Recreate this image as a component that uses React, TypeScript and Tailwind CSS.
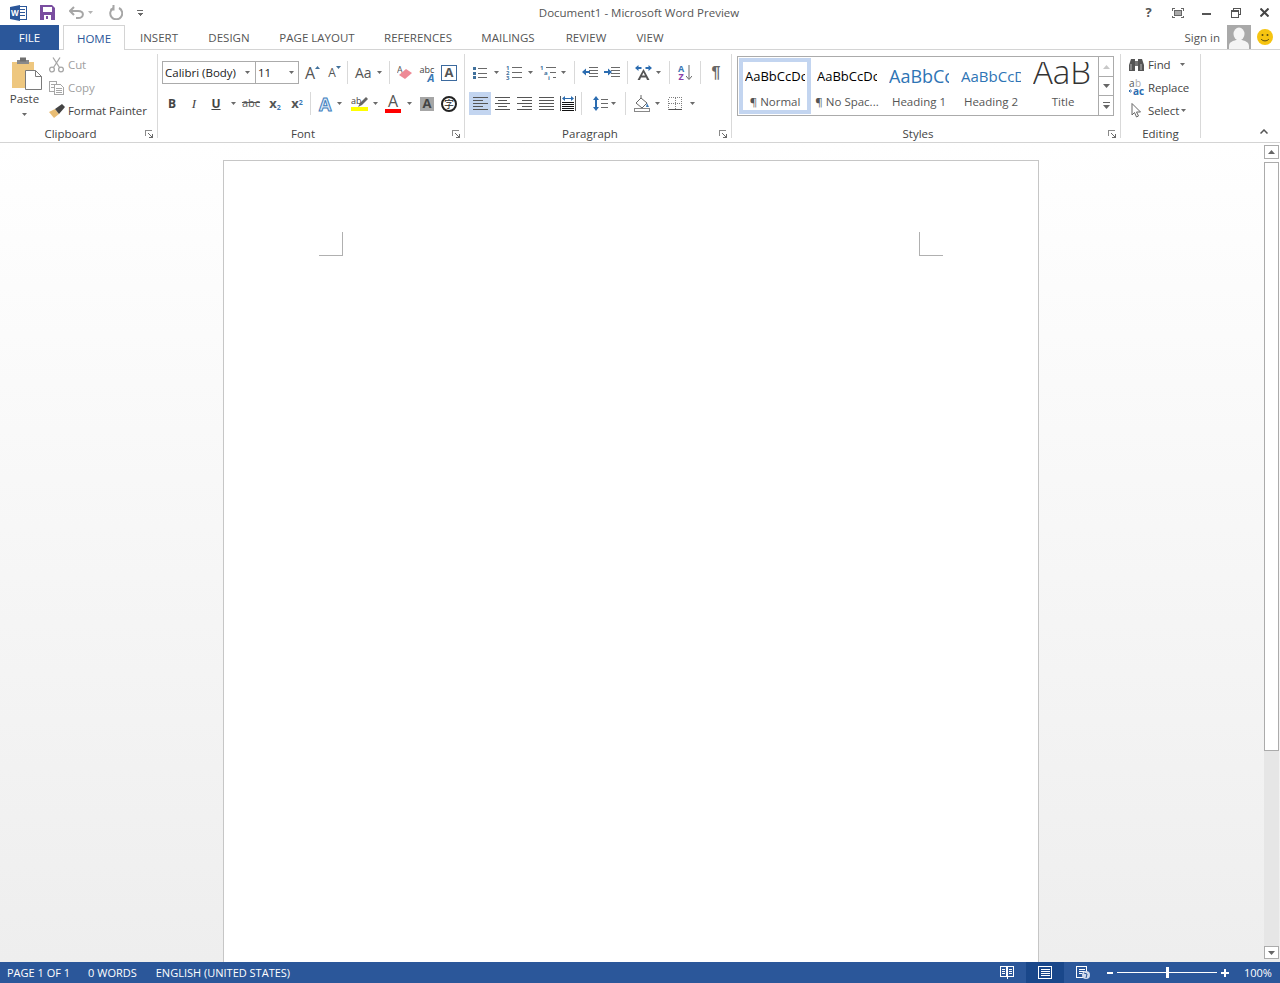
import type { ReactNode } from 'react';

const GRAY = '#6a6a6a';
const BLUE = '#41719c';

function Caret({ className = '' }: { className?: string }) {
  return (
    <svg width="5" height="3" viewBox="0 0 5 3" className={className}>
      <path d="M0 0h5L2.5 3z" fill="#6a6a6a" />
    </svg>
  );
}

function Launcher() {
  return (
    <svg width="8" height="8" viewBox="0 0 8 8" shapeRendering="crispEdges">
      <path d="M0.5 6V0.5H6.5" fill="none" stroke="#8a8a8a" />
      <path d="M3 3l4 4M7 4v3H4" fill="none" stroke="#6a6a6a" />
    </svg>
  );
}

function Sep({ className = '' }: { className?: string }) {
  return <div className={`w-px h-[23px] shrink-0 bg-[#d9d9d9] ${className}`} />;
}

function Btn({ className = 'w-[22px]', children }: { className?: string; children: ReactNode }) {
  return <div className={`h-[23px] flex items-center justify-center shrink-0 ${className}`}>{children}</div>;
}

function Group({ className, label, launcher = true, children }: { className: string; label: string; launcher?: boolean; children: ReactNode }) {
  return (
    <div className={`h-[84px] flex flex-col shrink-0 border-r border-[#d9d9d9] ${className}`}>
      <div className="flex-1 min-h-0">{children}</div>
      <div className="h-[14px] -mb-[3px] flex items-center">
        <div className="flex-1 text-center text-[11.5px] leading-[14px] text-[#444]">{label}</div>
        {launcher && <div className="w-[16px] flex justify-center"><Launcher /></div>}
      </div>
    </div>
  );
}

function AlignIcon({ kind }: { kind: 'left' | 'center' | 'right' | 'justify' }) {
  const spans: Record<string, [number, number][]> = {
    left: [[0, 15], [0, 10], [0, 15], [0, 10], [0, 15]],
    center: [[0, 15], [3, 12], [0, 15], [3, 12], [0, 15]],
    right: [[0, 15], [5, 15], [0, 15], [5, 15], [0, 15]],
    justify: [[0, 15], [0, 15], [0, 15], [0, 15], [0, 15]],
  };
  return (
    <svg width="15" height="13" viewBox="0 0 15 13" shapeRendering="crispEdges">
      {spans[kind].map(([a, b], i) => (
        <path key={i} d={`M${a} ${i * 3 + 0.5}H${b}`} stroke="#555" />
      ))}
    </svg>
  );
}

function IndentIcon({ flip }: { flip?: boolean }) {
  return (
    <svg width="16" height="13" viewBox="0 0 16 13" shapeRendering="crispEdges">
      <path d="M7 1.5h9M7 4.5h9M7 7.5h9M7 10.5h9" stroke={GRAY} />
      {flip ? (
        <path d="M0 5h4V2.5L8 6 4 9.5V7H0z" fill="#2b6cb0" shapeRendering="auto" />
      ) : (
        <path d="M8 5H4V2.5L0 6l4 3.5V7h4z" fill="#2b6cb0" shapeRendering="auto" />
      )}
    </svg>
  );
}

function Person() {
  return (
    <svg width="24" height="24" viewBox="0 0 24 24">
      <rect width="24" height="24" fill="#a9a9a9" />
      <ellipse cx="12" cy="9" rx="5.5" ry="6.5" fill="#f4f4f4" />
      <path d="M2 24v-3c0-4 4-5 7-6h6c3 1 7 2 7 6v3z" fill="#f4f4f4" />
    </svg>
  );
}

function SmallAction({ icon, label, muted, children }: { icon: ReactNode; label: string; muted?: boolean; children?: ReactNode }) {
  return (
    <div className="h-[23px] flex items-center">
      <div className="w-[19px] flex justify-center shrink-0">{icon}</div>
      <span className={`text-[11.5px] ml-[2px] tracking-[-0.1px] whitespace-nowrap ${muted ? 'text-[#a0a0a0]' : 'text-[#444]'}`}>{label}</span>
      {children}
    </div>
  );
}

function StylePreview({ label, className, selected, text = 'AaBbCcDc' }: { label: string; className: string; selected?: boolean; text?: string }) {
  return (
    <div className={`w-[72px] shrink-0 h-full flex flex-col items-center box-border border-[4px] ${selected ? 'border-[#c3d5f0]' : 'border-transparent'}`}>
      <div className="h-[33px] w-[60px] flex items-end overflow-hidden">
        <span className={`whitespace-nowrap ${className}`}>{text}</span>
      </div>
      <div className="text-[11.5px] text-[#555] mt-[8px] leading-[16px] whitespace-nowrap">{label}</div>
    </div>
  );
}

function ClipboardGroup() {
  return (
    <Group className="w-[158px]" label="Clipboard">
      <div className="flex">
        <div className="w-[47px] flex flex-col items-center pt-[3px] pl-[2px]">
          <svg width="32" height="33" viewBox="0 0 32 33" className="ml-[4px]">
            <rect x="1" y="5" width="22" height="26" fill="#eec77f" />
            <rect x="6" y="3" width="12" height="4" fill="#8a8a8a" />
            <rect x="9" y="0.5" width="6" height="4" fill="#6f6f6f" />
            <path d="M14.5 13.5h10l6 6v13h-16z" fill="#fff" stroke="#7a7a7a" />
            <path d="M24.5 13.5v6h6" fill="none" stroke="#7a7a7a" />
          </svg>
          <div className="text-[11.5px] text-[#444] leading-[16px] mt-[1px]">Paste</div>
          <Caret className="mt-[6px]" />
        </div>
        <div className="-mt-[1px]">
          <SmallAction muted label="Cut" icon={
            <svg width="15" height="16" viewBox="0 0 15 16" fill="none" stroke="#a6a6a6" strokeWidth="1.3">
              <circle cx="3" cy="12.5" r="2.4" /><circle cx="12" cy="12.5" r="2.4" />
              <path d="M4.5 10.5L11 0.5M10.5 10.5L4 0.5" />
            </svg>
          } />
          <SmallAction muted label="Copy" icon={
            <svg width="15" height="14" viewBox="0 0 15 14" fill="#fff" stroke="#a6a6a6" shapeRendering="crispEdges">
              <path d="M0.5 0.5h7v10h-7z" /><path d="M2 3.5h4M2 6.5h4" />
              <path d="M5.5 3.5h6l3 3v7h-9z" /><path d="M7 7.5h6M7 9.5h6M7 11.5h6" />
            </svg>
          } />
          <SmallAction label="Format Painter" icon={
            <svg width="16" height="14" viewBox="0 0 16 14">
              <path d="M0 8l6-3 4 5-5 4z" fill="#e9bd74" />
              <path d="M6 5l7-5 3 3-6 7z" fill="#444" />
            </svg>
          } />
        </div>
      </div>
    </Group>
  );
}

function FontGroup() {
  return (
    <Group className="w-[307px]" label="Font">
      <div className="flex flex-col pl-[4px] pt-[7px]">
        <div className="flex items-center h-[23px]">
          <div className="h-[23px] w-[94px] border border-[#ababab] flex items-center pl-[2px] pr-[5px] justify-between text-[11.5px] text-[#222]">
            <span>Calibri (Body)</span><Caret />
          </div>
          <div className="h-[23px] w-[44px] -ml-px border border-[#ababab] flex items-center pl-[2px] pr-[4px] justify-between text-[11.5px] text-[#222]">
            <span>11</span><Caret />
          </div>
          <Btn className="w-[22px]">
            <span className="relative text-[16px] leading-none text-[#555]">A<svg width="5" height="3" viewBox="0 0 5 3" className="absolute -right-[5px] top-[1px]"><path d="M0 3h5L2.5 0z" fill={BLUE} /></svg></span>
          </Btn>
          <Btn className="w-[22px]">
            <span className="relative text-[12px] leading-none text-[#555]">A<svg width="5" height="3" viewBox="0 0 5 3" className="absolute -right-[5px] -top-[1px]"><path d="M0 0h5L2.5 3z" fill={BLUE} /></svg></span>
          </Btn>
          <Sep className="ml-[4px]" />
          <Btn className="w-[35px] justify-start pl-[7px]">
            <span className="text-[14px] text-[#555]">Aa</span><Caret className="ml-[5px]" />
          </Btn>
          <Sep className="ml-[6px]" />
          <Btn className="w-[22px] ml-[4px]">
            <svg width="16" height="15" viewBox="0 0 16 15">
              <text x="0" y="8" fontSize="9" fill="#555" fontFamily="Open Sans">A</text>
              <path d="M2 10l7-6 6 4-7 6z" fill="#ee8a96" />
            </svg>
          </Btn>
          <Btn className="w-[22px]">
            <div className="relative w-[15px] h-[16px] leading-none">
              <span className="block text-[9px] text-[#444] leading-[9px]">abc</span>
              <span className="block text-[11px] font-bold italic text-[#3a78b5] leading-[8px] text-right">A</span>
            </div>
          </Btn>
          <Btn className="w-[22px]">
            <div className="w-[16px] h-[16px] border border-[#3c6a9e] flex items-center justify-center text-[13px] leading-none font-bold text-[#555]">A</div>
          </Btn>
        </div>
        <div className="flex items-center h-[23px] mt-[8px] -ml-[1px]">
          <Btn><span className="text-[12px] font-bold text-[#444]">B</span></Btn>
          <Btn><span className="text-[13px] italic text-[#444] font-['Liberation_Serif',serif]">I</span></Btn>
          <Btn><span className="text-[12px] font-bold underline text-[#444]">U</span></Btn>
          <Btn className="w-[13px]"><Caret /></Btn>
          <Btn><span className="text-[11px] line-through text-[#555]">abc</span></Btn>
          <Btn className="w-[22px] ml-[2px]"><span className="text-[13px] leading-none font-bold text-[#555]">x<sub className="text-[7px] text-[#3a78b5]">2</sub></span></Btn>
          <Btn><span className="text-[13px] leading-none font-bold text-[#555]">x<sup className="text-[7px] text-[#3a78b5]">2</sup></span></Btn>
          <Sep className="ml-[2px]" />
          <Btn className="w-[35px] justify-start pl-[8px]">
            <span className="text-[18px] leading-none font-bold text-[#dbe8f6] [-webkit-text-stroke:1px_#3f7fc0]">A</span>
            <Caret className="ml-[6px]" />
          </Btn>
          <Btn className="w-[34px] justify-start pl-[5px]">
            <svg width="17" height="15" viewBox="0 0 17 15">
              <text x="0" y="8" fontSize="9" fill="#444" fontFamily="Open Sans">ab</text>
              <path d="M7 11l2-4 6-6 2 2-6 6z" fill="#666" />
              <rect y="11" width="17" height="4" fill="#ffff00" />
            </svg>
            <Caret className="ml-[5px]" />
          </Btn>
          <Btn className="w-[36px] justify-start pl-[5px]">
            <div className="flex flex-col items-center">
              <span className="text-[16px] leading-[12px] text-[#555]">A</span>
              <div className="w-[16px] h-[4px] mt-[2px] bg-[#ff0000]" />
            </div>
            <Caret className="ml-[6px]" />
          </Btn>
          <Btn>
            <div className="w-[14px] h-[14px] bg-[#a6a6a6] flex items-center justify-center text-[13px] font-bold leading-none text-[#444]">A</div>
          </Btn>
          <Btn>
            <div className="w-[16px] h-[16px] rounded-full border-2 border-[#222] flex items-center justify-center text-[10px] leading-none text-[#222] font-['Noto_Sans_CJK_SC',sans-serif]">字</div>
          </Btn>
        </div>
      </div>
    </Group>
  );
}

function ParagraphGroup() {
  return (
    <Group className="w-[267px]" label="Paragraph">
      <div className="flex flex-col pt-[7px]">
        <div className="flex items-center h-[23px] pl-[4px]">
          <Btn>
            <svg width="14" height="13" viewBox="0 0 14 13" shapeRendering="crispEdges">
              <rect x="0" y="1" width="3" height="3" fill={BLUE} /><rect x="0" y="6" width="3" height="3" fill={BLUE} /><rect x="0" y="10" width="3" height="3" fill={BLUE} />
              <path d="M5 2.5h9M5 7.5h9M5 11.5h9" stroke={GRAY} />
            </svg>
          </Btn>
          <Btn className="w-[10px]"><Caret /></Btn>
          <Btn className="w-[22px] ml-[2px]">
            <svg width="16" height="15" viewBox="0 0 16 15">
              <text x="0" y="5" fontSize="6" fill={BLUE} fontFamily="Open Sans" fontWeight="700">1</text>
              <text x="0" y="10" fontSize="6" fill={BLUE} fontFamily="Open Sans" fontWeight="700">2</text>
              <text x="0" y="15" fontSize="6" fill={BLUE} fontFamily="Open Sans" fontWeight="700">3</text>
              <path d="M6 2.5h10M6 7.5h10M6 12.5h10" stroke={GRAY} />
            </svg>
          </Btn>
          <Btn className="w-[10px]"><Caret /></Btn>
          <Btn className="w-[22px] ml-[3px]">
            <svg width="18" height="15" viewBox="0 0 18 15">
              <text x="0" y="5" fontSize="6" fill={BLUE} fontFamily="Open Sans" fontWeight="700">1</text>
              <text x="4" y="10" fontSize="6" fill={BLUE} fontFamily="Open Sans" fontWeight="700">a</text>
              <text x="8" y="15" fontSize="6" fill={BLUE} fontFamily="Open Sans" fontWeight="700">i</text>
              <path d="M6 2.5h10M10 7.5h6M13 12.5h3" stroke={GRAY} />
            </svg>
          </Btn>
          <Btn className="w-[6px]"><Caret /></Btn>
          <Sep className="ml-[8px]" />
          <Btn className="w-[22px] ml-[4px]"><IndentIcon /></Btn>
          <Btn><IndentIcon flip /></Btn>
          <Sep className="ml-[4px]" />
          <Btn className="w-[24px] ml-[3px]">
            <svg width="17" height="15" viewBox="0 0 17 15">
              <path d="M0 3L3.500 0v2h3v2h-3v2zM17 3L13.500 0v2h-3v2h3v2z" fill="#2b6cb0" />
              <path d="M2.500 15L8.500 4l6 11h-2.500l-1-2.500H6l-1 2.500zM7 10.500h3L8.500 7.500z" fill="#555" />
            </svg>
          </Btn>
          <Btn className="w-[6px]"><Caret /></Btn>
          <Sep className="ml-[8px]" />
          <Btn className="w-[30px]">
            <div className="flex flex-col items-center text-[9px] leading-[8px] font-bold mr-[2px]">
              <span className="text-[#3a78b5]">A</span>
              <span className="text-[#8a3fa8]">Z</span>
            </div>
            <svg width="6" height="15" viewBox="0 0 6 15"><path d="M3 0v14M0 11l3 3.500L6 11" fill="none" stroke={GRAY} /></svg>
          </Btn>
          <Sep />
          <Btn className="w-[30px]"><span className="text-[16px] font-bold text-[#666] font-['Liberation_Sans',sans-serif]">¶</span></Btn>
        </div>
        <div className="flex items-center h-[23px] mt-[8px] pl-[4px]">
          <Btn className="w-[22px] bg-[#c3d5f0]"><AlignIcon kind="left" /></Btn>
          <Btn><AlignIcon kind="center" /></Btn>
          <Btn><AlignIcon kind="right" /></Btn>
          <Btn><AlignIcon kind="justify" /></Btn>
          <Btn>
            <svg width="16" height="15" viewBox="0 0 16 15" shapeRendering="crispEdges">
              <path d="M.5 0v15M15.500 0v15" stroke="#555" />
              <path d="M2 6.500h12M2 8.500h12M2 10.500h12M2 12.500h12M2 14.500h12" stroke="#111" />
              <path d="M4 2h8v1H4z" fill="#2b6cb0" />
              <path d="M2 2.500L5 0v5zM14 2.500L11 0v5z" fill="#2b6cb0" shapeRendering="auto" />
            </svg>
          </Btn>
          <Sep className="ml-[2px]" />
          <Btn className="w-[26px] justify-end">
            <svg width="15" height="15" viewBox="0 0 15 15">
              <path d="M3 0L0 4h2v7H0l3 4 3-4H4V4h2z" fill="#2b6cb0" />
              <path d="M8 3.500h7M8 7.500h7M8 11.500h7" stroke={GRAY} />
            </svg>
          </Btn>
          <Btn className="w-[10px]"><Caret /></Btn>
          <Sep className="ml-[7px]" />
          <Btn className="w-[24px] justify-end">
            <svg width="16" height="17" viewBox="0 0 16 17">
              <path d="M2 8l5-5 6 5-5 5z" fill="#fff" stroke="#666" />
              <path d="M7 3V0" stroke="#666" />
              <path d="M13 8l2 4h-3z" fill="#3a78b5" />
              <rect x="0.5" y="13.500" width="15" height="3" fill="#fff" stroke="#888" />
            </svg>
          </Btn>
          <Btn className="w-[14px]"><Caret /></Btn>
          <Btn className="w-[18px] justify-end">
            <svg width="14" height="13" viewBox="0 0 14 13" shapeRendering="crispEdges">
              <path d="M.5 .5h13v12H.5zM7 .5v12M.5 6.500h13" fill="none" stroke="#808080" strokeDasharray="1 1" />
              <path d="M.5 12.500h13" stroke="#555" />
            </svg>
          </Btn>
          <Btn className="w-[14px] ml-[3px]"><Caret /></Btn>
        </div>
      </div>
    </Group>
  );
}

function StylesGroup() {
  return (
    <Group className="w-[389px]" label="Styles">
      <div className="pl-[5px] pt-[2px]">
        <div className="w-[377px] h-[60px] border border-[#ababab] flex">
          <div className="flex-1 flex p-px min-w-0 overflow-hidden">
            <StylePreview selected label="¶ Normal" className="text-[13px] leading-[20px] text-black" />
            <StylePreview label="¶ No Spac..." className="text-[13px] leading-[20px] text-black" />
            <StylePreview label="Heading 1" text="AaBbCc" className="text-[18px] leading-[20px] text-[#2e74b5]" />
            <StylePreview label="Heading 2" className="text-[15px] leading-[20px] text-[#2e74b5]" />
            <StylePreview label="Title" text="AaBl" className="text-[33px] leading-[28px] font-light text-[#333]" />
          </div>
          <div className="w-[15px] flex flex-col border-l border-[#ababab] shrink-0">
            <div className="h-[20px] flex items-center justify-center border-b border-[#ababab]">
              <svg width="7" height="4" viewBox="0 0 7 4"><path d="M0 4h7L3.500 0z" fill="#c8c8c8" /></svg>
            </div>
            <div className="h-[19px] flex items-center justify-center border-b border-[#ababab]">
              <svg width="7" height="4" viewBox="0 0 7 4"><path d="M0 0h7L3.500 4z" fill="#666" /></svg>
            </div>
            <div className="flex-1 flex flex-col items-center justify-center gap-[2px]">
              <div className="w-[7px] h-px bg-[#666]" />
              <svg width="7" height="4" viewBox="0 0 7 4"><path d="M0 0h7L3.500 4z" fill="#666" /></svg>
            </div>
          </div>
        </div>
      </div>
    </Group>
  );
}

function EditingGroup() {
  return (
    <Group className="w-[80px]" launcher={false} label="Editing">
      <div className="-mt-[1px] pl-[6px]">
        <SmallAction label="Find" icon={
          <svg width="15" height="14" viewBox="0 0 15 14">
            <path d="M0 13V7l2-6h4v12zM9 13V1h4l2 6v6z" fill="#555" />
            <rect x="6" y="3" width="3" height="5" fill="#777" />
            <path d="M2 6v6M12 6v6" stroke="#bbb" />
          </svg>
        }>
          <Caret className="ml-[9px]" />
        </SmallAction>
        <SmallAction label="Replace" icon={
          <svg width="16" height="17" viewBox="0 0 16 17">
            <text x="0" y="8" fontSize="10" fill="#555" fontFamily="Open Sans">a</text>
            <text x="6" y="8" fontSize="10" fill="#aaa" fontFamily="Open Sans">b</text>
            <text x="4" y="16" fontSize="10" fill="#2b6cb0" fontFamily="Open Sans" fontWeight="700">ac</text>
            <path d="M0 12h3M1.500 10.500L0 12l1.500 1.500" fill="none" stroke="#2b6cb0" />
          </svg>
        } />
        <SmallAction label="Select" icon={
          <svg width="11" height="15" viewBox="0 0 11 15">
            <path d="M1 .5V12l2.500-2.500 2 4.500 2-1-2-4h4z" fill="#fff" stroke="#666" />
          </svg>
        }>
          <Caret className="ml-[2px]" />
        </SmallAction>
      </div>
    </Group>
  );
}

export default function App() {
  const tabs = [
    { label: 'INSERT', cls: 'w-[68px]' },
    { label: 'DESIGN', cls: 'w-[72px]' },
    { label: 'PAGE LAYOUT', cls: 'w-[104px]' },
    { label: 'REFERENCES', cls: 'w-[98px]' },
    { label: 'MAILINGS', cls: 'w-[82px]' },
    { label: 'REVIEW', cls: 'w-[74px]' },
    { label: 'VIEW', cls: 'w-[54px]' },
  ];

  return (
    <div className="w-[1280px] h-[983px] flex flex-col overflow-hidden bg-white text-[#444] font-['Open_Sans',sans-serif]">
      {/* title bar */}
      <div className="h-[25px] flex items-center shrink-0">
        <div className="w-[279px] flex items-center pl-[10px]">
          <svg width="17" height="16" viewBox="0 0 17 16">
            <rect x="6.500" y="1.500" width="10" height="13" fill="#fff" stroke="#2b579a" />
            <path d="M10 4.500h5M10 7.500h5M10 10.500h5" stroke="#2b579a" />
            <path d="M0 2l10-2v16L0 14z" fill="#2b579a" />
            <text x="1" y="11" fontSize="8" fontWeight="700" fill="#fff" fontFamily="Open Sans">W</text>
          </svg>
          <svg width="15" height="15" viewBox="0 0 15 15" className="ml-[13px]">
            <path d="M0 0h12l3 3v12H0z" fill="#7a4ea0" />
            <rect x="3" y="2" width="9" height="5" fill="#fff" />
            <rect x="4" y="10" width="7" height="5" fill="#fff" />
            <rect x="6" y="11" width="2" height="3" fill="#7a4ea0" />
          </svg>
          <svg width="15" height="13" viewBox="0 0 15 13" className="ml-[14px]" fill="none" stroke="#a6a6a6" strokeWidth="2">
            <path d="M1 5h8c7 0 6 7 0 7H7" /><path d="M5 1L1 5l4 4" />
          </svg>
          <Caret className="ml-[4px] opacity-50" />
          <svg width="14" height="15" viewBox="0 0 14 15" className="ml-[16px]" fill="none" stroke="#a6a6a6" strokeWidth="2">
            <path d="M4.500 3A6 6 0 1 0 10 3" /><path d="M3.500 0v5.500h-3" transform="translate(1 -1)" />
          </svg>
          <svg width="6" height="6" viewBox="0 0 6 6" className="ml-[14px]" shapeRendering="crispEdges">
            <path d="M0 .5h6" stroke="#6a6a6a" /><path d="M0 3h6L3 6z" fill="#6a6a6a" />
          </svg>
        </div>
        <div className="w-[720px] text-center text-[11.5px] text-[#555]">Document1 - Microsoft Word Preview</div>
        <div className="flex-1 flex items-center justify-end pr-[1px]">
          <div className="w-[29px] flex justify-center text-[13px] font-bold text-[#555]">?</div>
          <div className="w-[29px] flex justify-center">
            <svg width="12" height="10" viewBox="0 0 12 10" shapeRendering="crispEdges" fill="none" stroke="#666">
              <path d="M.5 2.500v-2H3M9 .5h2.500v2M11.500 7.500v2H9M3 9.500H.5v-2" /><rect x="2.500" y="2.500" width="7" height="5" fill="#aaa" />
            </svg>
          </div>
          <div className="w-[29px] flex justify-center"><div className="w-[9px] h-[2px] mt-[2px] bg-[#555]" /></div>
          <div className="w-[29px] flex justify-center">
            <svg width="10" height="10" viewBox="0 0 10 10" shapeRendering="crispEdges" fill="none" stroke="#555">
              <path d="M2.500 2.500V.5h7v6h-2" /><rect x=".5" y="2.500" width="7" height="7" /><path d="M.5 3.500h7" />
            </svg>
          </div>
          <div className="w-[29px] flex justify-center">
            <svg width="9" height="9" viewBox="0 0 9 9" stroke="#444" strokeWidth="2"><path d="M.5 .5l8 8M8.500 .5l-8 8" /></svg>
          </div>
        </div>
      </div>

      {/* tabs */}
      <div className="h-[25px] flex items-stretch shrink-0 border-b border-[#d4d4d4]">
        <div className="w-[59px] h-[25px] bg-[#2b579a] text-white text-[11.5px] flex items-center justify-center">FILE</div>
        <div className="w-[62px] h-[25px] ml-[4px] bg-white border border-b-0 border-[#d4d4d4] text-[#2b579a] text-[11.5px] pt-[1px] flex items-center justify-center">HOME</div>
        {tabs.map(t => (
          <div key={t.label} className={`${t.cls} text-[11.5px] pt-[1px] text-[#555] flex items-center justify-center whitespace-nowrap`}>{t.label}</div>
        ))}
        <div className="flex-1 flex items-center justify-end pr-[7px]">
          <span className="text-[11.5px] pt-[1px] text-[#555] mr-[7px]">Sign in</span>
          <Person />
          <svg width="16" height="16" viewBox="0 0 16 16" className="ml-[6px]">
            <circle cx="8" cy="8" r="8" fill="#f6c411" />
            <circle cx="5.500" cy="6" r="1" fill="#5a4a10" /><circle cx="10.500" cy="6" r="1" fill="#5a4a10" />
            <path d="M4 10c2 2.500 6 2.500 8 0" fill="none" stroke="#5a4a10" />
          </svg>
        </div>
      </div>

      {/* ribbon */}
      <div className="h-[93px] shrink-0 flex items-start pt-[4px] border-b border-[#d4d4d4]">
        <ClipboardGroup />
        <FontGroup />
        <ParagraphGroup />
        <StylesGroup />
        <EditingGroup />
        <div className="flex-1 h-[84px] flex items-end justify-end pr-[12px] pb-[4px]">
          <svg width="8" height="5" viewBox="0 0 8 5" fill="none" stroke="#555" strokeWidth="1.500"><path d="M.5 4.500L4 1l3.500 3.500" /></svg>
        </div>
      </div>

      {/* document area */}
      <div className="flex-1 min-h-0 flex bg-gradient-to-b from-white to-[#eeeeee]">
        <div className="flex-1 min-w-0 pt-[17px] pl-[223px] overflow-hidden">
          <div className="w-[816px] h-full bg-white border-t border-x border-[#c6c6c6] pt-[71px] px-[95px] flex justify-between items-start box-border">
            <div className="w-[24px] h-[24px] border-r border-b border-[#b0b0b0]" />
            <div className="w-[24px] h-[24px] border-l border-b border-[#b0b0b0]" />
          </div>
        </div>
        <div className="w-[16px] shrink-0 flex flex-col items-start pt-[2px] pb-[3px]">
          <div className="w-[15px] h-[14px] bg-white border border-[#ababab] flex items-center justify-center">
            <svg width="7" height="4" viewBox="0 0 7 4"><path d="M0 4h7L3.500 0z" fill="#666" /></svg>
          </div>
          <div className="w-[15px] h-[589px] mt-[3px] bg-white border border-[#ababab]" />
          <div className="flex-1 w-[15px] bg-[#e6e6e6]" />
          <div className="w-[15px] h-[13px] bg-white border border-[#ababab] flex items-center justify-center">
            <svg width="7" height="4" viewBox="0 0 7 4"><path d="M0 0h7L3.500 4z" fill="#666" /></svg>
          </div>
        </div>
      </div>

      {/* status bar */}
      <div className="h-[21px] shrink-0 bg-[#2b579a] flex items-center text-white text-[11px] pl-[7px]">
        <span className="whitespace-nowrap pt-[1px]">PAGE 1 OF 1</span>
        <span className="ml-[18px] whitespace-nowrap pt-[1px]">0 WORDS</span>
        <span className="ml-[19px] whitespace-nowrap pt-[1px]">ENGLISH (UNITED STATES)</span>
        <div className="flex-1" />
        <div className="w-[38px] h-[21px] flex items-center justify-center">
          <svg width="14" height="13" viewBox="0 0 14 13" shapeRendering="crispEdges" fill="none" stroke="#fff">
            <path d="M.5 .5h6v10h-6zM7.500 .5h6v10h-6z" /><path d="M2 3.500h3M2 5.500h3M2 7.500h3M9 3.500h3M9 5.500h3M9 7.500h3M7 10v3" />
          </svg>
        </div>
        <div className="w-[38px] h-[21px] bg-[#19478a] flex items-center justify-center">
          <svg width="14" height="13" viewBox="0 0 14 13" shapeRendering="crispEdges" fill="none" stroke="#fff">
            <path d="M.5 .5h13v12H.5z" /><path d="M2.500 3.500h9M2.500 5.500h9M2.500 7.500h9M2.500 9.500h9" />
          </svg>
        </div>
        <div className="w-[38px] h-[21px] flex items-center justify-center">
          <svg width="14" height="13" viewBox="0 0 14 13" fill="none">
            <path d="M.5 .5h10v11H.5z" stroke="#fff" shapeRendering="crispEdges" />
            <path d="M2.500 3.500h6M2.500 5.500h6M2.500 7.500h3" stroke="#fff" shapeRendering="crispEdges" />
            <circle cx="10" cy="9" r="4" fill="#cfd9ea" />
            <path d="M8 7l3 1-1 4" stroke="#2b579a" />
          </svg>
        </div>
        <div className="w-[6px] h-[2px] bg-white ml-[5px]" />
        <div className="relative w-[100px] h-px bg-white ml-[4px]">
          <div className="absolute left-[49px] -top-[5px] w-[3px] h-[11px] bg-white" />
        </div>
        <svg width="8" height="8" viewBox="0 0 8 8" className="ml-[4px]" fill="#fff"><path d="M3 0h2v3h3v2H5v3H3V5H0V3h3z" /></svg>
        <span className="ml-[15px] w-[36px] pt-[1px] whitespace-nowrap">100%</span>
      </div>
    </div>
  );
}
